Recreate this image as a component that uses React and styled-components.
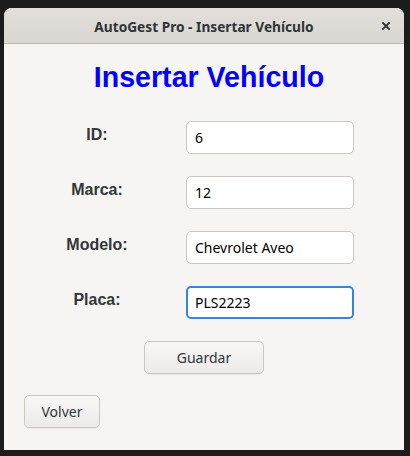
import React, { useEffect, useRef } from "react";
import styled, { createGlobalStyle } from "styled-components";

const GlobalStyle = createGlobalStyle`
  html, body {
    margin: 0;
    padding: 0;
    background: #1c1c1c;
  }
`;

const fields = [
  { label: "ID:", value: "6" },
  { label: "Marca:", value: "12" },
  { label: "Modelo:", value: "Chevrolet Aveo" },
  { label: "Placa:", value: "PLS2223", focused: true },
];

const App = () => {
  const focusRef = useRef(null);

  useEffect(() => {
    const el = focusRef.current;
    if (el) {
      el.focus();
      el.setSelectionRange(el.value.length, el.value.length);
    }
  }, []);

  return (
    <>
      <GlobalStyle />
      <Desktop>
        <Window>
          <TitleBar>
            <TitleText>AutoGest Pro - Insertar Vehículo</TitleText>
            <CloseButton aria-label="Cerrar">
              <svg width="10" height="10" viewBox="0 0 10 10">
                <path
                  d="M2 2 L8 8 M8 2 L2 8"
                  stroke="#2e3436"
                  strokeWidth="1.9"
                  strokeLinecap="square"
                />
              </svg>
            </CloseButton>
          </TitleBar>

          <Content>
            <Heading>Insertar Vehículo</Heading>

            <Form>
              {fields.map((f) => (
                <Row key={f.label}>
                  <Label>{f.label}</Label>
                  <Input
                    defaultValue={f.value}
                    $focused={f.focused}
                    ref={f.focused ? focusRef : null}
                  />
                </Row>
              ))}
            </Form>

            <SaveWrap>
              <Button $width={120}>Guardar</Button>
            </SaveWrap>
            <BackWrap>
              <Button $width={76}>Volver</Button>
            </BackWrap>
          </Content>
        </Window>
      </Desktop>
    </>
  );
};

const Desktop = styled.div`
  padding: 8px 6px 6px 4px;
  min-height: 456px;
  box-sizing: border-box;
`;

const Window = styled.div`
  width: 400px;
  height: 442px;
  display: flex;
  flex-direction: column;
  background: #f6f5f4;
  border-radius: 8px 8px 0 0;
  overflow: hidden;
`;

const TitleBar = styled.div`
  height: 35px;
  flex-shrink: 0;
  display: flex;
  align-items: center;
  justify-content: center;
  position: relative;
  background: linear-gradient(#e2dfdb, #dad6d2);
  border-bottom: 1px solid #bfb8b1;
`;

const TitleText = styled.div`
  font-family: "Noto Sans", sans-serif;
  font-weight: 700;
  font-size: 13.7px;
  color: #2e3436;
  margin-top: 1px;
`;

const CloseButton = styled.div`
  position: absolute;
  right: 13px;
  top: 13px;
  width: 10px;
  height: 10px;
  display: flex;
`;

const Content = styled.div`
  flex: 1;
  display: flex;
  flex-direction: column;
  padding-top: 17px;
`;

const Heading = styled.h1`
  margin: 0;
  padding-left: 10px;
  text-align: center;
  font-family: "Liberation Sans", Arial, sans-serif;
  font-weight: 700;
  font-size: 28.6px;
  line-height: 33px;
  color: #0000ff;
`;

const Form = styled.div`
  margin-top: 27px;
  padding-left: 20px;
  display: grid;
  grid-template-columns: 146px 168px;
  column-gap: 16px;
  row-gap: 22px;
`;

const Row = styled.div`
  display: contents;
`;

const Label = styled.div`
  align-self: center;
  text-align: center;
  font-family: "Liberation Sans", Arial, sans-serif;
  font-weight: 700;
  font-size: 16px;
  line-height: 18px;
  color: #333638;
  padding-bottom: 5px;
`;

const Input = styled.input`
  box-sizing: border-box;
  width: 168px;
  height: 33px;
  margin: 0;
  padding: 0 ${(p) => (p.$focused ? 7 : 8)}px;
  background: #ffffff;
  border: ${(p) => (p.$focused ? "2px solid #3584e4" : "1px solid #cdc7c2")};
  border-radius: 5px;
  font-family: "Noto Sans", sans-serif;
  font-size: 14px;
  color: #000000;
  caret-color: #000000;
  outline: none;
`;

const SaveWrap = styled.div`
  margin-top: 22px;
  display: flex;
  justify-content: center;
`;

const BackWrap = styled.div`
  margin-top: 21px;
  padding-left: 20px;
  display: flex;
`;

const Button = styled.button`
  box-sizing: border-box;
  width: ${(p) => p.$width}px;
  height: 33px;
  padding: 0;
  background: linear-gradient(#f8f7f6, #edebe9);
  border: 1px solid #cdc7c2;
  border-radius: 5px;
  box-shadow: 0 1px 1px rgba(0, 0, 0, 0.06);
  font-family: "Noto Sans", sans-serif;
  font-size: 14px;
  color: #2e3436;
  cursor: pointer;
`;

export default App;
